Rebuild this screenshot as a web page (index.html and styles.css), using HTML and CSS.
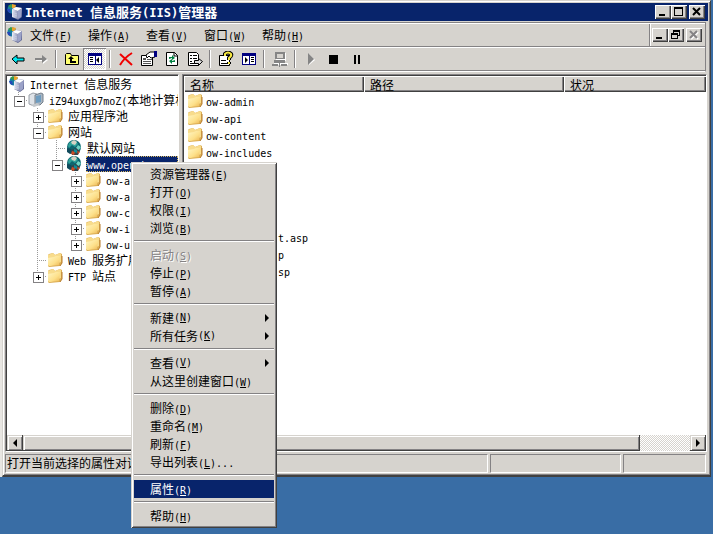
FILE: index.html
```html
<!DOCTYPE html>
<html lang="zh-CN">
<head>
<meta charset="utf-8">
<title>Internet 信息服务(IIS)管理器</title>
<link rel="stylesheet" href="styles.css">
</head>
<body>
<svg class="sprite" aria-hidden="true">
  <defs>
    <linearGradient id="fold" x1="0" y1="0" x2="1" y2="1">
      <stop offset="0" stop-color="#fff6c4"/><stop offset=".6" stop-color="#fde08a"/><stop offset="1" stop-color="#ecb654"/>
    </linearGradient>
    <linearGradient id="box" x1="0" y1="0" x2="1" y2="0">
      <stop offset="0" stop-color="#eef0fa"/><stop offset="1" stop-color="#8c93b8"/>
    </linearGradient>
    <symbol id="folder" viewBox="0 0 16 16">
      <path d="M1 3 2 2 6 1 8 3 13 1 15 2 15 11 13 14 2 15 1 14Z" fill="#dcae54"/>
      <path d="M1 3 6 1 8 3 13 1 14 2 14 10 3 14 1 13Z" fill="#f8dc8c"/>
      <path d="M1 6 7 5 9 4 13 4 12 13 2 14 1 13Z" fill="url(#fold)"/>
      <path d="M15 4V11L13 14" fill="none" stroke="#b77b2a"/>
    </symbol>
    <symbol id="globe" viewBox="0 0 16 16">
      <circle cx="8" cy="7" r="7" fill="#0c6670"/>
      <path d="M3 3 6 1 10 1 12 4 9 7 6 5 3 8 2 6Z" fill="#2fa39b"/>
      <path d="M5 2 8 0 11 2 9 5 6 4Z" fill="#d6d2c4"/>
      <path d="M12 5 15 7 12 11 10 8Z" fill="#6fd3c4"/>
      <path d="M1 8 5 9 8 13 4 14 1 12Z" fill="#114a5c"/>
      <path d="M5 10 10 8 14 11 12 15 6 15Z" fill="#36454b"/>
      <path d="M6 11 9 12 8 15 5 14ZM11 11 14 12 12 14Z" fill="#cf4c24"/>
      <path d="M8 9 11 10 11 13 8 12Z" fill="#0b8c98"/>
    </symbol>
    <symbol id="iis" viewBox="0 0 16 16">
      <circle cx="5" cy="5" r="4.500" fill="#1580a0"/>
      <path d="M1 2 4 0 6 2 4 4Z" fill="#3a9a48"/><path d="M5 0 9 1 8 4 5 4Z" fill="#e9a32c"/>
      <path d="M0 5 3 5 4 9 1 8Z" fill="#2448b8"/>
      <path d="M5 5 9 3 15 4 15 13 11 16 5 13Z" fill="#646a94"/>
      <path d="M5 5 11 7 11 15 5 13Z" fill="url(#box)"/>
      <path d="M5 5 9 3 15 4 11 7Z" fill="#fff"/>
      <path d="M11 7 15 4 14 13 11 15Z" fill="#9ba2c8"/>
      <path d="M6 9 10 10M6 11 10 12" stroke="#c7cbe0"/>
    </symbol>
    <symbol id="server" viewBox="0 0 16 16">
      <path d="M1 3 5 1 9 2 9 12 6 14 1 12Z" fill="#dfe3e8" stroke="#9aa0a8"/>
      <path d="M7 3 13 1 15 2 15 10 12 13 7 12Z" fill="#aab5c1" stroke="#75808c"/>
      <path d="M8 4 13 3 13 10 8 11Z" fill="#6d9cc0"/>
      <path d="M3 13 9 11 12 13 6 15Z" fill="#c4c8cc"/>
    </symbol>
  </defs>
</svg>

<div class="desk">
<main class="window">
  <header class="titlebar">
    <svg class="i16"><use href="#iis"/></svg>
    <h1><span class="l">Internet </span>信息服务<span class="l">(IIS)</span>管理器</h1>
    <div class="caption">
      <button aria-label="最小化"><svg viewBox="0 0 12 10"><path d="M2 7h6v2H2z"/></svg></button>
      <button aria-label="最大化"><svg viewBox="0 0 12 10"><path d="M1 0h9v9H1zM2 2v6h7V2z" fill-rule="evenodd"/></svg></button>
      <button class="gap" aria-label="关闭"><svg viewBox="0 0 12 10"><path d="M2 1l7 7M9 1l-7 7" class="x"/></svg></button>
    </div>
  </header>

  <div class="bars">
    <nav class="menubar">
      <svg class="i16"><use href="#iis"/></svg>
      <button>文件<span class="l">(<u>F</u>)</span></button>
      <button>操作<span class="l">(<u>A</u>)</span></button>
      <button>查看<span class="l">(<u>V</u>)</span></button>
      <button>窗口<span class="l">(<u>W</u>)</span></button>
      <button>帮助<span class="l">(<u>H</u>)</span></button>
      <div class="caption child">
        <button aria-label="最小化子窗口"><svg viewBox="0 0 12 10"><path d="M2 7h6v2H2z"/></svg></button>
        <button aria-label="还原子窗口"><svg viewBox="0 0 12 10"><path d="M3 0h7v6H8V5h1V2H4v1H3zM1 3h7v6H1zM2 5v3h5V5z" fill-rule="evenodd"/></svg></button>
        <button class="gap" aria-label="关闭子窗口" disabled><svg viewBox="0 0 12 10"><path d="M3 2l7 7M10 2l-7 7" class="x lit"/><path d="M2 1l7 7M9 1l-7 7" class="x"/></svg></button>
      </div>
    </nav>
    <div class="toolbar">
      <button aria-label="后退"><svg class="i16" viewBox="0 0 16 16"><path d="M2 8l5-4v3h7v3H7v3z" fill="#00e8f0" stroke="#000"/></svg></button>
      <button aria-label="前进" disabled><svg class="i16" viewBox="0 0 16 16"><path d="M3 8h7V5l5 4-5 4v-3H3z" fill="#fff"/><path d="M2 7h7V4l5 4-5 4V9H2z" fill="#858585"/></svg></button>
      <i class="sep"></i>
      <button aria-label="向上一级"><svg class="i16" viewBox="0 0 16 16"><path d="M1.500 13.500V3.500l1-1h4l1 2h7v9z" fill="#ffff70" stroke="#000"/><path d="M4 8l3-3 3 3zM6 7h2v3h4v2H6z" fill="#000"/></svg></button>
      <button class="pressed" aria-label="显示/隐藏控制台树"><svg class="i16" viewBox="0 0 16 16"><path d="M1 2h14v12H1z" fill="#000080"/><path d="M2 5h6v8H2zM9 5h5v8H9z" fill="#fff"/><path d="M3 6h3v1H3zM3 8h3v1H3zM3 10h3v1H3zM12 6v6l-3-3z" fill="#000"/></svg></button>
      <i class="sep"></i>
      <button aria-label="删除"><svg class="i16" viewBox="0 0 16 16"><path d="M2 3l12 11M14 2C9 5 5 9 2 14" fill="none" stroke="#f00000" stroke-width="2"/></svg></button>
      <button aria-label="属性"><svg class="i16" viewBox="0 0 16 16"><path d="M.5 4.500h11v10H.5z" fill="#fff" stroke="#000"/><path d="M2 7h3v2H2zM6 8h5v1H6zM2 10h8v1H2zM2 12h8v1H2z" fill="#555"/><path d="M5 4l4-3h5v5l-4 1-2-2-2 2z" fill="#fff" stroke="#000"/><path d="M13 0h3v6h-3z" fill="#000080"/></svg></button>
      <button aria-label="刷新"><svg class="i16" viewBox="0 0 16 16"><path d="M2.500 1.500h8l3 3v10h-11z" fill="#fff" stroke="#000"/><path d="M10 1v4h4" fill="none" stroke="#000"/><path d="M5 8V6h3V4l3 3-3 2V7M11 9v2H8v2L5 10l3-2v2" fill="#008040"/></svg></button>
      <button aria-label="导出列表"><svg class="i16" viewBox="0 0 16 16"><path d="M1.500 1.500h8l2 2v11h-10z" fill="#fff" stroke="#000"/><path d="M3 4h2v1H3zM6 4h4v1H6zM3 7h2v1H3zM6 7h4v1H6zM3 10h2v1H3zM3 12h5v1H3z" fill="#000"/><path d="M7.500 9.500h4v-2l4 3-4 4v-2h-4z" fill="#ddd" stroke="#000"/></svg></button>
      <i class="sep"></i>
      <button aria-label="帮助"><svg class="i16" viewBox="0 0 16 16"><path d="M1.500 4.500h10v10h-10z" fill="#fff" stroke="#000"/><path d="M3 9h5v1H3zM3 12h6v1H3z" fill="#000"/><path d="M7 5V3q3-3 6 0 1 2-2 4v2M11 11v2" fill="none" stroke="#000" stroke-width="4"/><path d="M7 5V3q3-3 6 0 1 2-2 4v2M11 11v2" fill="none" stroke="#f8e840" stroke-width="2"/></svg></button>
      <button aria-label="操作窗格"><svg class="i16" viewBox="0 0 16 16"><path d="M1 2h14v12H1z" fill="#000080"/><path d="M2 5h6v8H2zM9 5h5v8H9z" fill="#fff"/><path d="M10 6h3v1h-3zM10 8h3v1h-3zM10 10h3v1h-3zM4 6v6l3-3z" fill="#000"/></svg></button>
      <i class="sep"></i>
      <button aria-label="连接" disabled><svg class="i16" viewBox="0 0 16 16"><path d="M4 2h10v8H4zM2 12h14v2H2z" fill="#fff"/><path d="M3 1h10v7H3zM5 3v4h6V3zM2 9h11v3H2zM0 13h6v2H0zM9 13h6v2H9zM7 12h1v4H7z" fill="#858585" fill-rule="evenodd"/><path d="M5 3h6v4H5z" fill="#d6d3ce"/></svg></button>
      <i class="sep"></i>
      <button aria-label="启动" disabled><svg class="i16" viewBox="0 0 16 16"><path d="M6 3l6 6-6 5z" fill="#fff"/><path d="M5 2l6 6-6 6z" fill="#858585"/></svg></button>
      <button aria-label="停止"><svg class="i16" viewBox="0 0 16 16"><path d="M3 4h9v9H3z"/></svg></button>
      <button aria-label="暂停"><svg class="i16" viewBox="0 0 16 16"><path d="M5 4h2v9H5zM9 4h2v9H9z"/></svg></button>
    </div>
  </div>

  <div class="panes">
    <section class="pane tree">
      <ul>
        <li><svg class="i16"><use href="#iis"/></svg><span><b class="l">Internet </b>信息服务</span></li>
        <li><i class="g end minus"></i><svg class="i16"><use href="#server"/></svg><span><b class="l">iZ94uxgb7moZ(</b>本地计算机<b class="l">)</b></span></li>
        <li><i class="g"></i><i class="g tee plus"></i><svg class="i16"><use href="#folder"/></svg><span>应用程序池</span></li>
        <li><i class="g"></i><i class="g tee minus"></i><svg class="i16"><use href="#folder"/></svg><span>网站</span></li>
        <li><i class="g"></i><i class="g line"></i><i class="g tee"></i><svg class="i16"><use href="#globe"/></svg><span>默认网站</span></li>
        <li><i class="g"></i><i class="g line"></i><i class="g end minus"></i><svg class="i16"><use href="#globe"/></svg><span class="sel"><b class="l">www.openwbs.com</b></span></li>
        <li><i class="g"></i><i class="g line"></i><i class="g"></i><i class="g tee plus"></i><svg class="i16"><use href="#folder"/></svg><span><b class="l">ow-a</b></span></li>
        <li><i class="g"></i><i class="g line"></i><i class="g"></i><i class="g tee plus"></i><svg class="i16"><use href="#folder"/></svg><span><b class="l">ow-a</b></span></li>
        <li><i class="g"></i><i class="g line"></i><i class="g"></i><i class="g tee plus"></i><svg class="i16"><use href="#folder"/></svg><span><b class="l">ow-c</b></span></li>
        <li><i class="g"></i><i class="g line"></i><i class="g"></i><i class="g tee plus"></i><svg class="i16"><use href="#folder"/></svg><span><b class="l">ow-i</b></span></li>
        <li><i class="g"></i><i class="g line"></i><i class="g"></i><i class="g end plus"></i><svg class="i16"><use href="#folder"/></svg><span><b class="l">ow-u</b></span></li>
        <li><i class="g"></i><i class="g tee"></i><svg class="i16"><use href="#folder"/></svg><span><b class="l">Web </b>服务扩展</span></li>
        <li><i class="g"></i><i class="g end plus"></i><svg class="i16"><use href="#folder"/></svg><span><b class="l">FTP </b>站点</span></li>
      </ul>
      <div class="scroll">
        <button aria-label="树向左滚动"><svg viewBox="0 0 8 8"><path d="M6 0v8L2 4z"/></svg></button>
        <i class="thumb"></i>
        <i class="track short"></i>
        <button aria-label="树向右滚动"><svg viewBox="0 0 8 8"><path d="M2 0v8l4-4z"/></svg></button>
      </div>
    </section>

    <section class="pane list">
      <table>
        <colgroup><col class="c1"><col class="c2"><col></colgroup>
        <thead><tr><th>名称</th><th>路径</th><th>状况</th></tr></thead>
        <tbody>
          <tr><td><svg class="i16"><use href="#folder"/></svg><span class="l">ow-admin</span></td><td></td><td></td></tr>
          <tr><td><svg class="i16"><use href="#folder"/></svg><span class="l">ow-api</span></td><td></td><td></td></tr>
          <tr><td><svg class="i16"><use href="#folder"/></svg><span class="l">ow-content</span></td><td></td><td></td></tr>
          <tr><td><svg class="i16"><use href="#folder"/></svg><span class="l">ow-includes</span></td><td></td><td></td></tr>
          <tr><td><svg class="i16"><use href="#folder"/></svg></td><td></td><td></td></tr>
          <tr><td></td><td></td><td></td></tr>
          <tr><td></td><td></td><td></td></tr>
          <tr><td></td><td></td><td></td></tr>
          <tr><td class="tail"><span class="l">t.asp</span></td><td></td><td></td></tr>
          <tr><td class="tail"><span class="l">p</span></td><td></td><td></td></tr>
          <tr><td class="tail"><span class="l">sp</span></td><td></td><td></td></tr>
        </tbody>
      </table>
      <div class="scroll">
        <button aria-label="列表向左滚动"><svg viewBox="0 0 8 8"><path d="M6 0v8L2 4z"/></svg></button>
        <i class="thumb"></i>
        <i class="track"></i>
        <button aria-label="列表向右滚动"><svg viewBox="0 0 8 8"><path d="M2 0v8l4-4z"/></svg></button>
      </div>
    </section>
  </div>

  <footer class="status">
    <div class="cell">打开当前选择的属性对话框。</div>
    <div class="cell mid"></div>
    <div class="cell last"></div>
  </footer>
</main>
</div>

<div class="context" role="menu">
  <button role="menuitem">资源管理器<span class="l">(<u>E</u>)</span></button>
  <button role="menuitem">打开<span class="l">(<u>O</u>)</span></button>
  <button role="menuitem">权限<span class="l">(<u>I</u>)</span></button>
  <button role="menuitem">浏览<span class="l">(<u>B</u>)</span></button>
  <hr>
  <button role="menuitem" disabled>启动<span class="l">(<u>S</u>)</span></button>
  <button role="menuitem">停止<span class="l">(<u>P</u>)</span></button>
  <button role="menuitem">暂停<span class="l">(<u>A</u>)</span></button>
  <hr>
  <button role="menuitem" class="sub">新建<span class="l">(<u>N</u>)</span></button>
  <button role="menuitem" class="sub">所有任务<span class="l">(<u>K</u>)</span></button>
  <hr>
  <button role="menuitem" class="sub">查看<span class="l">(<u>V</u>)</span></button>
  <button role="menuitem">从这里创建窗口<span class="l">(<u>W</u>)</span></button>
  <hr>
  <button role="menuitem">删除<span class="l">(<u>D</u>)</span></button>
  <button role="menuitem">重命名<span class="l">(<u>M</u>)</span></button>
  <button role="menuitem">刷新<span class="l">(<u>F</u>)</span></button>
  <button role="menuitem">导出列表<span class="l">(<u>L</u>)...</span></button>
  <hr>
  <button role="menuitem" class="active">属性<span class="l">(<u>R</u>)</span></button>
  <hr>
  <button role="menuitem">帮助<span class="l">(<u>H</u>)</span></button>
</div>
</body>
</html>
```
FILE: styles.css
```css
:root {
  --face: #d6d3ce;
  --dark: #404040;
  --shade: #848284;
  --navy: #08246b;
}
* { box-sizing: border-box; }
body {
  margin: 0;
  min-height: 100vh;
  display: flex;
  flex-direction: column;
  background: #396da5;
  color: #000;
  font: 12px/16px "Noto Sans CJK SC", sans-serif;
  overflow: hidden;
}
button {
  font: inherit;
  color: inherit;
  background: none;
  border: 0;
  padding: 0;
  margin: 0;
  white-space: nowrap;
}
ul { list-style: none; margin: 0; padding: 0; }
.sprite { position: absolute; width: 0; height: 0; }
.i16 { width: 16px; height: 16px; flex: none; display: block; }
.l { font-family: "DejaVu Sans Mono", monospace; font-size: 10px; font-weight: normal; white-space: pre; line-height: 12px; }
u { text-underline-offset: 1px; text-decoration-thickness: 1px; }

/* Window frame */
.desk {
  flex: 1;
  display: flex;
  margin-bottom: 57px;
  padding: 0 2px;
  background: linear-gradient(to right, #e8e6e2 2px, #396da5 2px);
}
.window {
  flex: 1;
  min-width: 0;
  display: flex;
  flex-direction: column;
  background: var(--face);
  border: 1px solid var(--face);
  border-right-color: var(--dark);
  border-bottom: 2px solid var(--dark);
  box-shadow: inset 1px 1px #fff, inset -1px -1px var(--shade);
  padding: 2px;
}
.titlebar {
  height: 18px;
  display: flex;
  align-items: center;
  gap: 2px;
  padding-left: 2px;
  background: var(--navy);
  color: #fff;
}
.titlebar h1 { margin: 0; font-size: 13px; line-height: 16px; font-weight: bold; }
.titlebar .l { font-size: 12px; font-weight: bold; }
.caption { margin-left: auto; display: flex; align-items: center; padding-right: 3px; }
.caption button {
  width: 16px;
  height: 14px;
  background: var(--face);
  box-shadow: inset 1px 1px #fff, inset -1px -1px var(--dark), inset -2px -2px var(--shade);
}
.caption svg { display: block; width: 12px; height: 10px; margin: 1px 2px; }
.caption .gap { margin-left: 2px; }
.x { stroke: #000; stroke-width: 2; fill: none; }
.x.lit { stroke: #fff; }
.caption button:disabled .x:not(.lit) { stroke: var(--shade); }

/* Menu and tool bars */
.bars { margin: 1px 2px 2px 0; border: 1px solid var(--shade); border-bottom-color: #fff; }
.menubar {
  height: 24px;
  display: flex;
  align-items: center;
  border-top: 1px solid #fff;
  border-bottom: 1px solid var(--shade);
}
.menubar > .i16 { margin: 0 7px 0 1px; }
.menubar > button { width: 58px; text-align: left; }
.child { align-self: stretch; padding-left: 2px; border-left: 1px solid var(--shade); box-shadow: inset 1px 0 #fff; }
.toolbar {
  height: 24px;
  display: flex;
  align-items: center;
  border-top: 1px solid #fff;
  border-bottom: 1px solid var(--shade);
}
.toolbar button { width: 23px; height: 22px; display: grid; place-items: center; }
.toolbar .pressed {
  background: repeating-conic-gradient(#fff 0 25%, var(--face) 0 50%) 0 0 / 2px 2px;
  box-shadow: inset 1px 1px var(--shade), inset -1px -1px #fff;
}
.sep { width: 2px; height: 18px; margin: 0 3px; border-left: 1px solid var(--shade); border-right: 1px solid #fff; }

/* Split view */
.panes { flex: 1; min-height: 0; display: flex; gap: 3px; margin-right: 1px; }
.pane {
  min-width: 0;
  display: flex;
  flex-direction: column;
  padding: 1px 0 0 1px;
  background: linear-gradient(to right, var(--dark) 1px, transparent 1px), linear-gradient(var(--dark) 1px, #fff 1px);
  border: 1px solid;
  border-color: var(--shade) #fff #fff var(--shade);
  overflow: hidden;
}
.tree { flex: 0 0 174px; }
.list { flex: 1; }
.tree ul { flex: 1; min-height: 0; overflow: hidden; }
.tree li { height: 16px; padding-left: 2px; display: flex; align-items: center; white-space: nowrap; }
.tree li .i16 { margin-right: 4px; }
.tree li span { line-height: 16px; padding: 0 1px; }
.tree li .sel { background: var(--navy); color: #fff; outline: 1px dotted #d7b860; outline-offset: -1px; }
.g { position: relative; flex: none; width: 19px; height: 16px; }
.line, .tee { background: repeating-linear-gradient(#999 0 1px, transparent 1px 2px) 9px 0 / 1px 16px no-repeat; }
.end { background: repeating-linear-gradient(#999 0 1px, transparent 1px 2px) 9px 0 / 1px 8px no-repeat; }
.tee::before, .end::before {
  content: "";
  position: absolute;
  inset: 8px 0 auto 9px;
  height: 1px;
  background: repeating-linear-gradient(to right, #999 0 1px, transparent 1px 2px);
}
.plus::after, .minus::after {
  content: "";
  position: absolute;
  left: 5px;
  top: 4px;
  width: 9px;
  height: 9px;
  border: 1px solid var(--shade);
  background: linear-gradient(#000, #000) center / 5px 1px no-repeat, #fff;
}
.plus::after {
  background: linear-gradient(#000, #000) center / 5px 1px no-repeat, linear-gradient(#000, #000) center / 1px 5px no-repeat, #fff;
}
table { width: 100%; table-layout: fixed; border-collapse: separate; border-spacing: 0; }
.c1 { width: 180px; }
.c2 { width: 200px; }
th {
  height: 16px;
  padding: 0 6px;
  text-align: left;
  font-weight: normal;
  line-height: 15px;
  background: var(--face);
  box-shadow: inset 1px 1px #fff, inset -1px -1px var(--dark), inset -2px -2px var(--shade);
}
td { height: 17px; padding: 0 0 0 3px; line-height: 16px; white-space: nowrap; }
td .i16 { display: inline-block; vertical-align: top; margin-right: 3px; }
.tail { padding-left: 94px; }
.scroll { display: flex; height: 16px; margin-top: auto; }
.scroll button, .thumb {
  background: var(--face);
  box-shadow: inset -1px -1px var(--dark), inset 1px 1px var(--face), inset 2px 2px #fff, inset -2px -2px var(--shade);
}
.scroll button { width: 16px; flex: none; display: grid; place-items: center; }
.scroll svg { width: 8px; height: 8px; }
.thumb { flex: 1; }
.track { width: 50px; background: repeating-conic-gradient(#fff 0 25%, var(--face) 0 50%) 0 0 / 2px 2px; }
.short { width: 24px; }

/* Status bar */
.status { display: flex; gap: 2px; height: 21px; margin-right: 2px; padding: 2px 0 0; }
.cell {
  flex: 1;
  min-width: 0;
  padding-left: 1px;
  line-height: 16px;
  white-space: nowrap;
  overflow: hidden;
  border: 1px solid;
  border-color: var(--shade) #fff #fff var(--shade);
}
.mid { flex: 0 0 131px; }
.last { flex: 0 0 83px; }

/* Context menu */
.context {
  position: absolute;
  left: 131px;
  top: 162px;
  width: 146px;
  padding: 3px;
  display: flex;
  flex-direction: column;
  background: var(--face);
  box-shadow: inset 1px 1px var(--face), inset -1px -1px var(--dark), inset 2px 2px #fff, inset -2px -2px var(--shade);
}
.context button { height: 18px; padding-left: 16px; text-align: left; line-height: 16px; }
.context button:disabled { color: var(--shade); text-shadow: 1px 1px #fff; }
.context .active { background: var(--navy); color: #fff; }
.context hr { width: 100%; height: 2px; margin: 3px 0 4px; border: 0; border-top: 1px solid var(--shade); border-bottom: 1px solid #fff; }
.context .sub { display: flex; align-items: center; }
.sub::after { content: ""; margin: 0 5px 0 auto; border: 4px solid transparent; border-left-color: #000; border-right: 0; }
```
